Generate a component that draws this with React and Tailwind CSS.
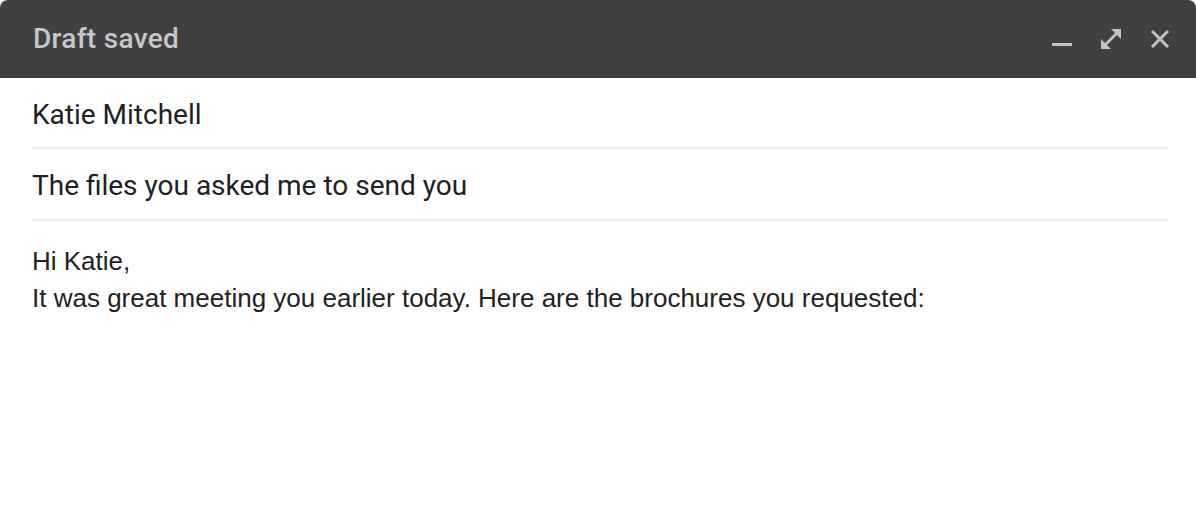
import React from 'react';

function MinimizeIcon() {
  return (
    <svg width="20" height="20" viewBox="0 0 20 20" className="block">
      <rect x="0" y="14" width="20" height="3" fill="currentColor" />
    </svg>
  );
}

function ExpandIcon() {
  return (
    <svg width="22" height="22" viewBox="0 0 22 22" className="block">
      <line x1="4" y1="18" x2="18" y2="4" stroke="currentColor" strokeWidth="2.6" />
      <polygon points="11,1 21,1 21,11" fill="currentColor" />
      <polygon points="1,11 1,21 11,21" fill="currentColor" />
    </svg>
  );
}

function CloseIcon() {
  return (
    <svg width="20" height="20" viewBox="0 0 20 20" className="block">
      <path d="M2 2 L18 18 M18 2 L2 18" stroke="currentColor" strokeWidth="3" />
    </svg>
  );
}

export default function App() {
  return (
    <div className="w-[1196px] h-[508px] bg-white overflow-hidden">
      {/* Title bar */}
      <div className="h-[78px] bg-[#404040] rounded-t-lg flex items-center justify-between pl-[33px] pr-[26px]">
        <span className="text-[28px] font-medium text-[#c4c6ca] tracking-[0.3px]" style={{ fontFamily: 'Roboto, sans-serif' }}>
          Draft saved
        </span>
        <div className="flex items-center gap-[28px] text-[#c2c2c2]">
          <MinimizeIcon />
          <ExpandIcon />
          <CloseIcon />
        </div>
      </div>

      <div className="px-[32px] pr-[28px]" style={{ fontFamily: 'Roboto, sans-serif' }}>
        <div className="h-[71px] flex items-center pt-[4px] border-b-2 border-[#eceef1] text-[28px] text-[#202124]">
          Katie Mitchell
        </div>
        <div className="h-[72px] flex items-center pt-[4px] border-b-2 border-[#eceef1] text-[28px] text-[#202124]">
          The files you asked me to send you
        </div>
      </div>

      <div className="px-[32px] pt-[22px] text-[26px] leading-[37px] text-[#222222]" style={{ fontFamily: '"Liberation Sans", Arial, sans-serif' }}>
        <div>Hi Katie,</div>
        <div>It was great meeting you earlier today. Here are the brochures you requested:</div>
      </div>
    </div>
  );
}
